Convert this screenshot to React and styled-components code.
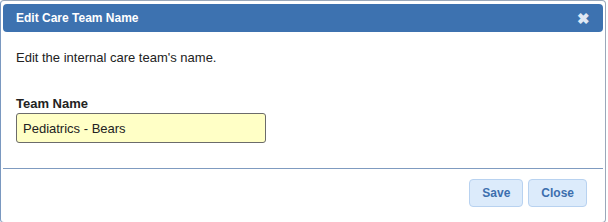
import React from 'react'
import styled, { createGlobalStyle } from 'styled-components'

const GlobalStyle = createGlobalStyle`
    html, body {
        margin: 0;
        padding: 0;
        background: #ffffff;
        font-family: "Liberation Sans", Arial, sans-serif;
    }
`

const Page = styled.div`
    width: 608px;
    height: 222px;
    display: flex;
    overflow: hidden;
`

const Dialog = styled.div`
    width: 600px;
    height: 216px;
    padding: 3px 2px 2px 2px;
    border: 1px solid #9aa8ba;
    border-left-color: #7a98c0;
    border-radius: 4px;
    background: #ffffff;
    display: flex;
    flex-direction: column;
`

const TitleBar = styled.div`
    height: 28px;
    background: #3d72b0;
    border-radius: 4px;
    display: flex;
    align-items: center;
    justify-content: space-between;
    padding: 0 13px 0 13px;
    color: #ffffff;
    font-weight: bold;
    font-size: 12px;
`

const CloseX = styled.span`
    font-size: 15px;
    color: #dfe8f5;
    line-height: 1;
`

const Body = styled.div`
    flex: 1;
    padding: 18px 13px 0 13px;
    border-bottom: 1px solid #7f9bc0;
    font-size: 13px;
    color: #222222;
`

const Intro = styled.p`
    margin: 0 0 31px 0;
    line-height: 15px;
`

const Label = styled.label`
    display: block;
    font-weight: bold;
    line-height: 15px;
    margin-bottom: 2px;
`

const TextInput = styled.input`
    box-sizing: border-box;
    width: 250px;
    height: 30px;
    padding: 0 6px;
    margin-left: 0;
    border: 1px solid #6b6b6b;
    border-radius: 3px;
    background: #ffffc6;
    font-family: "Liberation Sans", Arial, sans-serif;
    font-size: 13px;
    color: #222222;
    outline: none;
`

const Footer = styled.div`
    height: 51px;
    display: flex;
    justify-content: flex-end;
    align-items: flex-start;
    gap: 5px;
    padding: 10px 16px 0 0;
    box-sizing: border-box;
`

const Button = styled.button`
    height: 28px;
    padding: 0 ${p => p.$pad}px;
    border: 1px solid #b8d2f0;
    border-radius: 4px;
    background: #dcebfb;
    color: #3d6fae;
    font-family: "Liberation Sans", Arial, sans-serif;
    font-weight: bold;
    font-size: 12px;
    cursor: pointer;
`

export default function App() {
    return (
        <>
            <GlobalStyle />
            <Page>
                <Dialog>
                    <TitleBar>
                        <span>Edit Care Team Name</span>
                        <CloseX>✖</CloseX>
                    </TitleBar>
                    <Body>
                        <Intro>Edit the internal care team's name.</Intro>
                        <Label htmlFor="team-name">Team Name</Label>
                        <TextInput id="team-name" defaultValue="Pediatrics - Bears" />
                    </Body>
                    <Footer>
                        <Button $pad={12}>Save</Button>
                        <Button $pad={12}>Close</Button>
                    </Footer>
                </Dialog>
            </Page>
        </>
    )
}
